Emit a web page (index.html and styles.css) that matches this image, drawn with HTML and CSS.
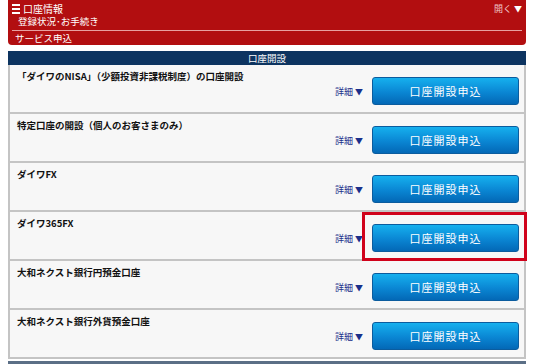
FILE: index.html
```html
<!DOCTYPE html>
<html lang="ja">
<head>
<meta charset="utf-8">
<link rel="stylesheet" href="styles.css">
</head>
<body>
<header class="menu">
  <div class="menu-top">
    <div class="menu-title"><span class="burger"><i></i><i></i><i></i></span>口座情報</div>
    <div class="menu-toggle">開く<span class="tri">▼</span></div>
  </div>
  <div class="menu-sub">登録状況･お手続き</div>
  <div class="menu-line"></div>
  <div class="menu-sub2">サービス申込</div>
</header>
<section class="panel">
  <h2 class="panel-head">口座開設</h2>
  <ul class="list">
    <li class="row"><div class="title">「ダイワのNISA」（少額投資非課税制度）の口座開設</div><div class="actions"><span class="detail">詳細<span class="tri">▼</span></span><button class="btn">口座開設申込</button></div></li>
    <li class="row"><div class="title">特定口座の開設（個人のお客さまのみ）</div><div class="actions"><span class="detail">詳細<span class="tri">▼</span></span><button class="btn">口座開設申込</button></div></li>
    <li class="row"><div class="title">ダイワFX</div><div class="actions"><span class="detail">詳細<span class="tri">▼</span></span><button class="btn">口座開設申込</button></div></li>
    <li class="row"><div class="title">ダイワ365FX</div><div class="actions"><span class="detail">詳細<span class="tri">▼</span></span><button class="btn">口座開設申込</button></div><div class="highlight"></div></li>
    <li class="row"><div class="title">大和ネクスト銀行円預金口座</div><div class="actions"><span class="detail">詳細<span class="tri">▼</span></span><button class="btn">口座開設申込</button></div></li>
    <li class="row"><div class="title">大和ネクスト銀行外貨預金口座</div><div class="actions"><span class="detail">詳細<span class="tri">▼</span></span><button class="btn">口座開設申込</button></div></li>
  </ul>
  <div class="next-bar"></div>
</section>
</body>
</html>
```

FILE: styles.css
```css
* { box-sizing: border-box; }
html, body { margin: 0; padding: 0; background: #fff; }
body {
  font-family: "Noto Sans CJK JP", "Noto Sans", sans-serif;
  font-size: 10px;
  color: #222;
  width: 534px;
  height: 364px;
  overflow: hidden;
}
.menu {
  margin: 0 8px;
  background: #b20e10;
  border-radius: 0 0 4px 4px;
  color: #fff;
  height: 45px;
  padding: 2px 4px 0 4px;
  line-height: 12px;
}
.menu-top { display: flex; justify-content: space-between; align-items: center; height: 13px; }
.menu-title { display: flex; align-items: center; font-size: 10px; height: 13px; }
.burger { display: inline-flex; flex-direction: column; gap: 2px; width: 8px; margin-right: 3px; }
.burger i { display: block; height: 2px; background: #fff; }
.menu-toggle { font-size: 9px; color: #f0c8c8; display: flex; align-items: center; }
.menu-toggle .tri { color: #fff; font-size: 8px; margin-left: 2px; }
.menu-sub { padding-left: 6px; font-size: 9.5px; height: 13px; line-height: 13px; overflow: hidden; }
.menu-line { height: 1px; background: #e8a0a0; margin-top: 2px; }
.menu-sub2 { padding-left: 3px; font-size: 9.5px; margin-top: 1px; height: 13px; line-height: 13px; overflow: hidden; }
.panel { margin: 6px 8px 0 8px; }
.panel-head {
  margin: 0;
  background: #0d3460;
  color: #fff;
  font-size: 9.5px;
  font-weight: normal;
  text-align: center;
  height: 14px;
  line-height: 14px;
}
.list { list-style: none; margin: 0; padding: 0; border-left: 2px solid #c4c4c4; border-right: 2px solid #c4c4c4; }
.row {
  position: relative;
  background: #f7f7f7;
  border-bottom: 2px solid #c4c4c4;
  height: 49px;
  display: flex;
  justify-content: space-between;
  align-items: flex-start;
  padding: 5px 5px 0 7px;
}
.title { font-weight: bold; font-size: 9.5px; line-height: 13px; color: #111; }
.actions { display: flex; align-items: center; margin-top: 7px; }
.detail { color: #1a2f8a; font-size: 9px; margin-right: 9px; display: flex; align-items: center; }
.detail .tri { font-size: 8px; margin-left: 2px; }
.btn {
  width: 147px;
  height: 28px;
  border: 1px solid #0b5c9e;
  border-radius: 3px;
  background: linear-gradient(#16b0ee, #0a86d3 55%, #0368b6);
  color: #fff;
  font-family: "Noto Sans CJK JP", sans-serif;
  font-size: 11px;
  letter-spacing: 1px;
  padding: 0;
}
.highlight {
  position: absolute;
  right: -3px;
  top: 0px;
  width: 165px;
  height: 49px;
  border: 3px solid #d0021b;
}
.next-bar { height: 4px; background: #5b6f86; margin-top: 2px; }
```
